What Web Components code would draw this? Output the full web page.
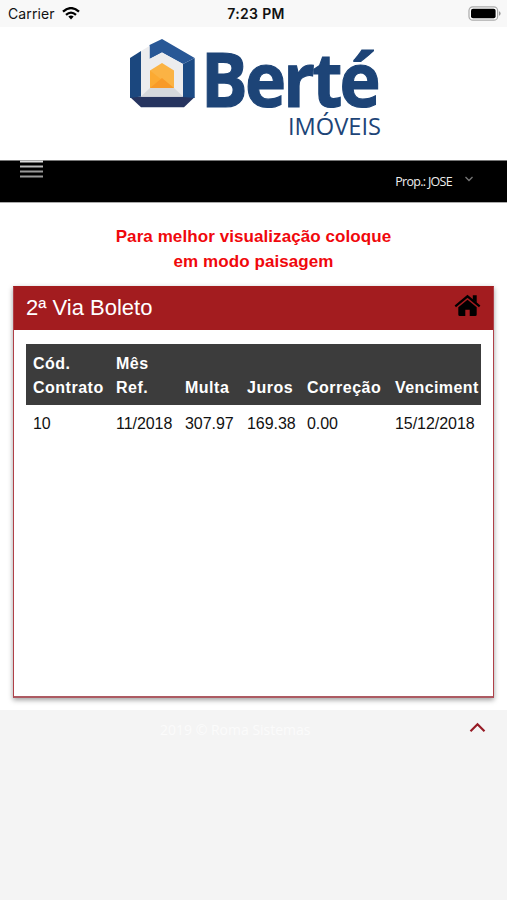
<!DOCTYPE html>
<html lang="pt-BR">
<head>
<meta charset="utf-8">
<meta name="viewport" content="width=device-width, initial-scale=1">
<title>Berté Imóveis</title>
<style>
  body {
    margin: 0;
    background: #f4f4f4;
    font-family: "Liberation Sans", Arial, sans-serif;
    color: #111;
    overflow: hidden;
  }

  main {
    background: #fff;
    height: 507px;
    padding: 1px 13px 0 13px;
    box-sizing: border-box;
  }
</style>
</head>
<body>
<status-bar carrier="Carrier" time="7:23 PM"></status-bar>
<brand-logo></brand-logo>
<nav-bar>Prop.: JOSE</nav-bar>
<main>
  <rotate-notice>Para melhor visualização coloque<br>em modo paisagem</rotate-notice>
  <portlet-box heading="2ª Via Boleto">
    <boleto-table></boleto-table>
  </portlet-box>
</main>
<page-footer>2019 © Roma Sistemas</page-footer>

<script>
class StatusBar extends HTMLElement {
  connectedCallback() {
    this.render();
  }

  getCarrier() {
    return this.getAttribute("carrier");
  }

  getTime() {
    return this.getAttribute("time");
  }

  render() {
    const root = this.attachShadow({ mode: "open" });
    root.innerHTML = `
    <style>
      :host {
        display: grid;
        grid-template-columns: 1fr auto 1fr;
        align-items: center;
        height: 27px;
        padding: 0 6px 0 8px;
        box-sizing: border-box;
        background: #f8f8f8;
        font: 14px/27px Inter, sans-serif;
      }
      .carrier { display: flex; align-items: center; gap: 7px; letter-spacing: .1px; }
      .time { font-weight: 600; font-size: 14px; margin-left: 3px; letter-spacing: .35px; }
      .battery { justify-self: end; }
      svg { display: block; }
    </style>
    <div class="carrier">
      <span>${this.getCarrier()}</span>
      <svg width="18" height="13" viewBox="0 0 18 13" fill="none" stroke="#000" stroke-width="2.3">
        <path d="M1 4.6Q9-2.4 17 4.6M4 7.8Q9 3.4 14 7.8"/>
        <path d="M6.300 9.600Q9 7.600 11.700 9.600L9 12.400Z" fill="#000" stroke="none"/>
      </svg>
    </div>
    <div class="time">${this.getTime()}</div>
    <svg class="battery" width="33" height="15" viewBox="0 0 33 15">
      <rect x="1" y=".8" width="28.6" height="13.4" rx="3.8" fill="#fff" stroke="#aaa" stroke-width="1.2"/>
      <rect x="3" y="2.8" width="24.6" height="9.4" rx="2" fill="#000"/>
      <path d="M31 5.200q1.600.6 1.600 2.300T31 9.800Z" fill="#999"/>
    </svg>
    `;
  }
}
customElements.define("status-bar", StatusBar);

class BrandLogo extends HTMLElement {
  connectedCallback() {
    this.render();
  }

  render() {
    const root = this.attachShadow({ mode: "open" });
    root.innerHTML = `
    <style>
      :host { display: block; height: 133px; background: #fff; }
      svg { display: block; }
      text { font-family: "Open Sans", "Noto Sans", sans-serif; fill: #1d4477; }
      .name { font-size: 76px; font-weight: 700; stroke: #1d4477; stroke-width: 1.2px; letter-spacing: -3px; }
    </style>
    <svg width="507" height="133" viewBox="0 27 507 133" role="img">
      <!-- house mark -->
      <path d="M130 97L141 96.500H183L194.700 97L184 107.300H141Z" fill="#26345f"/>
      <path d="M130 58L141 51V96.500L130 98Z" fill="#1b477e"/>
      <path d="M183 64L194.700 58V98L183 97Z" fill="#1b4a84"/>
      <path d="M149.500 45L162 39L194.700 58L183 64L162 52.500L149.500 59Z" fill="#285796"/>
      <path d="M141 51L149.500 46V59L162 52.500L183 64V96.500H141Z" fill="#ececee"/>
      <path d="M141 96.500L150 88H174L183 96.500Z" fill="#d5d8dc"/>
      <path d="M150 70.500L162 63L174 70.500V88H150Z" fill="#fbb344"/>
      <path d="M150 70.500L162 80L150 88Z" fill="#fcaa32"/>
      <path d="M150 88L162 78L174 88Z" fill="#f89a28"/>
      <!-- wordmark -->
      <text class="name" transform="translate(201 106.700) scale(.915 1)">Berté</text>
      <text x="288" y="135" font-size="23.500" textLength="93" lengthAdjust="spacingAndGlyphs">IMÓVEIS</text>
    </svg>
    `;
  }
}
customElements.define("brand-logo", BrandLogo);

class NavBar extends HTMLElement {
  connectedCallback() {
    this.render();
  }

  render() {
    const root = this.attachShadow({ mode: "open" });
    root.innerHTML = `
    <style>
      :host {
        display: flex;
        justify-content: space-between;
        height: 43px;
        padding: 0 33px 0 20px;
        box-sizing: border-box;
        background: #000;
        border-top: 1px solid #777;
        border-bottom: 1px solid #aaa;
        color: #eee;
      }
      .menu { margin-top: -1px; }
      .user {
        display: flex;
        align-items: center;
        gap: 12px;
        font: 500 12.500px "Open Sans", sans-serif;
        letter-spacing: -.7px;
      }
      svg { display: block; }
      .user svg { margin-top: -5px; }
    </style>
    <svg class="menu" width="23" height="19" viewBox="0 0 23 19">
      <path d="M0 1.500H23" stroke="#ddd" stroke-width="2"/>
      <path d="M0 6.500H23" stroke="#bbb" stroke-width="2"/>
      <path d="M0 11.500H23M0 16.500H23" stroke="#999" stroke-width="2"/>
    </svg>
    <div class="user">
      <span><slot></slot></span>
      <svg width="10" height="6" viewBox="0 0 10 6" fill="none" stroke="#777" stroke-width="1.3"><path d="M1.500 1L5 4.500L8.500 1"/></svg>
    </div>
    `;
  }
}
customElements.define("nav-bar", NavBar);

class RotateNotice extends HTMLElement {
  connectedCallback() {
    this.render();
  }

  render() {
    const root = this.attachShadow({ mode: "open" });
    root.innerHTML = `
    <style>
      :host {
        display: block;
        margin: 21px 0 12px;
        color: #f0080c;
        font-size: 17px;
        font-weight: 700;
        line-height: 24.500px;
        letter-spacing: .08px;
        text-align: center;
      }
    </style>
    <slot></slot>
    `;
  }
}
customElements.define("rotate-notice", RotateNotice);

class PortletBox extends HTMLElement {
  connectedCallback() {
    this.render();
  }

  getHeading() {
    return this.getAttribute("heading");
  }

  render() {
    const root = this.attachShadow({ mode: "open" });
    root.innerHTML = `
    <style>
      :host {
        display: block;
        height: 412px;
        box-sizing: border-box;
        border: 1px solid #b04048;
        border-top-color: #a31c1f;
        border-bottom: 2px solid #ad5a62;
        background: #fff;
        box-shadow: 0 2px 5px rgba(0, 0, 0, .38);
      }
      header {
        display: flex;
        justify-content: space-between;
        height: 43px;
        padding: 0 12px;
        background: #a31c1f;
        color: #fff;
      }
      h2 { margin: 0; font-size: 22px; font-weight: 400; line-height: 42px; }
      svg { display: block; margin-top: 7px; }
      .body { padding: 14px 12px; }
    </style>
    <header>
      <h2>${this.getHeading()}</h2>
      <svg width="27" height="23" viewBox="0 0 27 23">
        <path d="M13.500 5.700L22.700 13.300V20.500Q22.700 22 21.200 22H15.700V15.800H11.300V22H5.800Q4.300 22 4.300 20.500V13.300Z"/>
        <path d="M1.300 12.400L13.500 2.300L25.700 12.400" fill="none" stroke="#000" stroke-width="2.200"/>
        <path d="M18.800 1.200H22.700V8.800L18.800 5.600Z"/>
      </svg>
    </header>
    <div class="body"><slot></slot></div>
    `;
  }
}
customElements.define("portlet-box", PortletBox);

class BoletoTable extends HTMLElement {
  connectedCallback() {
    this.render();
  }

  getColumns() {
    return [
      ["Cód.<br>Contrato", "10", 83],
      ["Mês<br>Ref.", "11/2018", 69],
      ["Multa", "307.97", 62],
      ["Juros", "169.38", 60],
      ["Correção", "0.00", 88],
      ["Venciment", "15/12/2018", 93],
    ];
  }

  render() {
    const columns = this.getColumns();
    const root = this.attachShadow({ mode: "open" });
    root.innerHTML = `
    <style>
      :host { display: block; font-size: 16px; line-height: 24px; }
      table { width: 455px; table-layout: fixed; border-collapse: collapse; }
      th, td { text-align: left; white-space: nowrap; }
      th {
        height: 49px;
        padding: 7px 0 5px 7px;
        background: #3c3c3c;
        color: #fff;
        vertical-align: bottom;
        letter-spacing: .5px;
      }
      th:last-child { letter-spacing: .4px; }
      td { padding: 7px 0 5px 7px; letter-spacing: -.05px; }
    </style>
    <table>
      <colgroup>${columns.map((c) => `<col style="width: ${c[2]}px">`).join("")}</colgroup>
      <thead><tr>${columns.map((c) => `<th>${c[0]}</th>`).join("")}</tr></thead>
      <tbody><tr>${columns.map((c) => `<td>${c[1]}</td>`).join("")}</tr></tbody>
    </table>
    `;
  }
}
customElements.define("boleto-table", BoletoTable);

class PageFooter extends HTMLElement {
  connectedCallback() {
    this.render();
  }

  render() {
    const root = this.attachShadow({ mode: "open" });
    root.innerHTML = `
    <style>
      :host {
        display: flex;
        justify-content: space-between;
        height: 190px;
        padding: 9px 11px 0 160px;
        box-sizing: border-box;
        background: #f4f4f4;
        color: #fbfbfb;
        font: 14px/21px "Open Sans", sans-serif;
      }
      .top {
        display: flex;
        align-items: center;
        justify-content: center;
        width: 38px;
        height: 16px;
      }
    </style>
    <span><slot></slot></span>
    <div class="top">
      <svg width="17" height="11" viewBox="0 0 17 11" fill="none" stroke="#971c26" stroke-width="2.200"><path d="M1.500 9.200L8.500 2.200L15.500 9.200"/></svg>
    </div>
    `;
  }
}
customElements.define("page-footer", PageFooter);
</script>
</body>
</html>
